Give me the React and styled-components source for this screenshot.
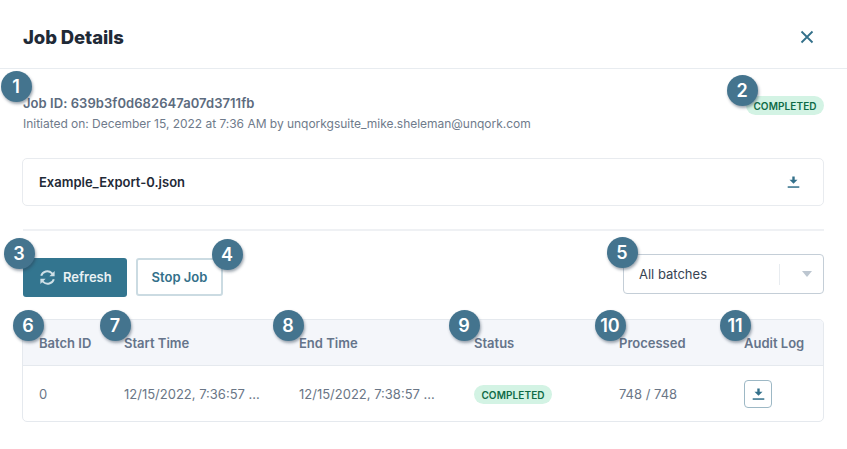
import React from 'react'
import styled, { createGlobalStyle } from 'styled-components'

const GlobalStyle = createGlobalStyle`
  html, body {
    margin: 0;
    padding: 0;
    background: #fff;
  }
  body {
    font-family: Inter, "Liberation Sans", sans-serif;
  }
`

const Page = styled.div`
  position: relative;
  width: 847px;
  height: 449px;
  overflow: hidden;
  background: #fff;
`

const Header = styled.header`
  display: flex;
  align-items: center;
  justify-content: space-between;
  height: 69px;
  box-sizing: border-box;
  padding: 6px 33px 0 23px;
  border-bottom: 1px solid #e8ecf0;
`

const Title = styled.h1`
  margin: 0;
  font-size: 18.5px;
  font-weight: 800;
  letter-spacing: -0.1px;
  color: #1f2a37;
`

const CloseButton = styled.button`
  display: flex;
  padding: 0;
  border: 0;
  background: none;
  color: #33708a;
`

const Body = styled.main`
  padding: 24px 23px 0 23px;
`

const JobRow = styled.section`
  display: flex;
  justify-content: space-between;
  align-items: flex-start;
`

const JobId = styled.div`
  font-size: 13px;
  line-height: 20px;
  font-weight: 600;
  letter-spacing: 0.06px;
  color: #5c6b7e;
`

const Initiated = styled.div`
  margin-top: 1px;
  font-size: 12px;
  line-height: 20px;
  letter-spacing: -0.025px;
  color: #6f7b8b;
`

const Pill = styled.span`
  display: inline-flex;
  align-items: center;
  justify-content: center;
  width: 78px;
  height: 19px;
  border-radius: 10px;
  background: #d3f3e4;
  color: #0f6b47;
  font-size: 10px;
  font-weight: 600;
  letter-spacing: 0.1px;
  margin-top: ${p => p.$top || 0}px;
`

const FileCard = styled.div`
  display: flex;
  align-items: center;
  justify-content: space-between;
  height: 48px;
  box-sizing: border-box;
  margin: 24px 0 24px -1px;
  padding: 0 23px 0 16px;
  border: 1.5px solid #e8ebef;
  border-radius: 5px;
  font-size: 13px;
  font-weight: 600;
  color: #1f2a37;
`

const Divider = styled.hr`
  margin: -1px 0 0;
  height: 2px;
  border: 0;
  background: #eff1f4;
`

const Toolbar = styled.div`
  display: flex;
  align-items: center;
  justify-content: space-between;
  margin-top: 23px;
  height: 40px;
`

const Buttons = styled.div`
  display: flex;
  align-items: center;
  gap: 9px;
  margin-top: 6px;
`

const PrimaryButton = styled.button`
  display: flex;
  align-items: center;
  gap: 7px;
  height: 39px;
  width: 104px;
  box-sizing: border-box;
  padding: 0 0 0 16px;
  border: 0;
  border-radius: 3px;
  background: #33758f;
  color: #e9f1f4;
  font: 600 13px Inter, sans-serif;
`

const SecondaryButton = styled.button`
  height: 38px;
  width: 87px;
  box-sizing: border-box;
  padding: 0;
  border: 2px solid #cbdbe2;
  border-radius: 3px;
  background: #fff;
  color: #33708a;
  font: 600 13px Inter, sans-serif;
`

const Select = styled.div`
  display: flex;
  align-items: center;
  width: 201px;
  height: 40px;
  box-sizing: border-box;
  border: 1.5px solid #c4ced7;
  border-radius: 4px;
  padding-left: 15px;
  font-size: 13px;
  color: #374353;
`

const SelectValue = styled.span`
  flex: 1;
`

const SelectArrow = styled.span`
  display: flex;
  align-items: center;
  justify-content: flex-end;
  width: 44px;
  height: 21px;
  box-sizing: border-box;
  padding-right: 11px;
  border-left: 1px solid #e8ecf0;
  &::after {
    content: '';
    border-left: 5px solid transparent;
    border-right: 5px solid transparent;
    border-top: 6px solid #bcc6d0;
  }
`

const Table = styled.div`
  margin: 25px 0 0 -1px;
  border: 1.5px solid #e5e9ee;
  border-radius: 5px;
  overflow: hidden;
`

const TableRow = styled.div`
  display: grid;
  grid-template-columns: 85px 175px 175px 145px 125px 1fr;
  align-items: center;
  padding-left: 16px;
  box-sizing: border-box;
`

const HeadRow = styled(TableRow)`
  height: 46px;
  background: #f4f6fa;
  border-bottom: 1.5px solid #e5e9ee;
`

const BodyRow = styled(TableRow)`
  height: 55px;
`

const HeadCell = styled.div`
  font-size: 13px;
  font-weight: 600;
  color: #65748a;
  white-space: nowrap;
`

const Cell = styled.div`
  font-size: 13px;
  color: #6a7686;
  white-space: nowrap;
`

const IconButton = styled.button`
  display: flex;
  align-items: center;
  justify-content: center;
  width: 28px;
  height: 28px;
  box-sizing: border-box;
  padding: 0;
  border: 1.5px solid #9db8c5;
  border-radius: 4px;
  background: #fff;
`

const Marker = styled.span`
  position: absolute;
  left: ${p => p.$x - 15.5}px;
  top: ${p => p.$y - 15.5}px;
  display: flex;
  align-items: center;
  justify-content: center;
  width: 31px;
  height: 31px;
  border-radius: 50%;
  background: #44748e;
  color: #fff;
  font-size: 18px;
  font-weight: 600;
  box-shadow: 1px 2px 3px rgba(40, 60, 80, 0.45);
`

const DownloadIcon = () => (
  <svg width="13" height="14" viewBox="0 0 13 14" fill="#33708a">
    <path d="M5.3 1.5h2.4v3.3h2.8L6.5 8.8l-4-4h2.8z" />
    <rect x="0.7" y="11.3" width="11.6" height="1.5" />
  </svg>
)

const CloseIcon = () => (
  <svg width="14" height="14" viewBox="0 0 14 14" fill="none" stroke="currentColor" strokeWidth="1.8">
    <path d="M1.5 1.5l11 11M12.5 1.5l-11 11" />
  </svg>
)

const RefreshIcon = () => (
  <svg width="17" height="17" viewBox="0 0 17 17" fill="none">
    <path d="M2.2 6.8a6.4 6.4 0 0 1 10.6-2.7l1.2 1.4" stroke="#cfe0e7" strokeWidth="2" />
    <path d="M14.8 10.2a6.4 6.4 0 0 1-10.6 2.7l-1.2-1.4" stroke="#cfe0e7" strokeWidth="2" />
    <path d="M15.6 2v5.2h-5.2z" fill="#cfe0e7" />
    <path d="M1.4 15V9.8h5.2z" fill="#cfe0e7" />
  </svg>
)

const markers = [
  { n: 1, x: 16, y: 86 },
  { n: 2, x: 742, y: 90 },
  { n: 3, x: 19, y: 253 },
  { n: 4, x: 227, y: 254 },
  { n: 5, x: 622, y: 252 },
  { n: 6, x: 28, y: 325 },
  { n: 7, x: 115, y: 325 },
  { n: 8, x: 288, y: 325 },
  { n: 9, x: 464, y: 325 },
  { n: 10, x: 610, y: 325 },
  { n: 11, x: 735, y: 325 },
]

function App() {
  return (
    <Page>
      <GlobalStyle />
      <Header>
        <Title>Job Details</Title>
        <CloseButton><CloseIcon /></CloseButton>
      </Header>
      <Body>
        <JobRow>
          <div>
            <JobId>Job ID: 639b3f0d682647a07d3711fb</JobId>
            <Initiated>Initiated on: December 15, 2022 at 7:36 AM by unqorkgsuite_mike.sheleman@unqork.com</Initiated>
          </div>
          <Pill $top={3}>COMPLETED</Pill>
        </JobRow>
        <FileCard>
          Example_Export-0.json
          <DownloadIcon />
        </FileCard>
        <Divider />
        <Toolbar>
          <Buttons>
            <PrimaryButton><RefreshIcon />Refresh</PrimaryButton>
            <SecondaryButton>Stop Job</SecondaryButton>
          </Buttons>
          <Select>
            <SelectValue>All batches</SelectValue>
            <SelectArrow />
          </Select>
        </Toolbar>
        <Table>
          <HeadRow>
            <HeadCell>Batch ID</HeadCell>
            <HeadCell>Start Time</HeadCell>
            <HeadCell>End Time</HeadCell>
            <HeadCell>Status</HeadCell>
            <HeadCell>Processed</HeadCell>
            <HeadCell>Audit Log</HeadCell>
          </HeadRow>
          <BodyRow>
            <Cell>0</Cell>
            <Cell>12/15/2022, 7:36:57 ...</Cell>
            <Cell>12/15/2022, 7:38:57 ...</Cell>
            <div><Pill>COMPLETED</Pill></div>
            <Cell>748 / 748</Cell>
            <IconButton><DownloadIcon /></IconButton>
          </BodyRow>
        </Table>
      </Body>
      {markers.map(m => (
        <Marker key={m.n} $x={m.x} $y={m.y}>{m.n}</Marker>
      ))}
    </Page>
  )
}

export default App
